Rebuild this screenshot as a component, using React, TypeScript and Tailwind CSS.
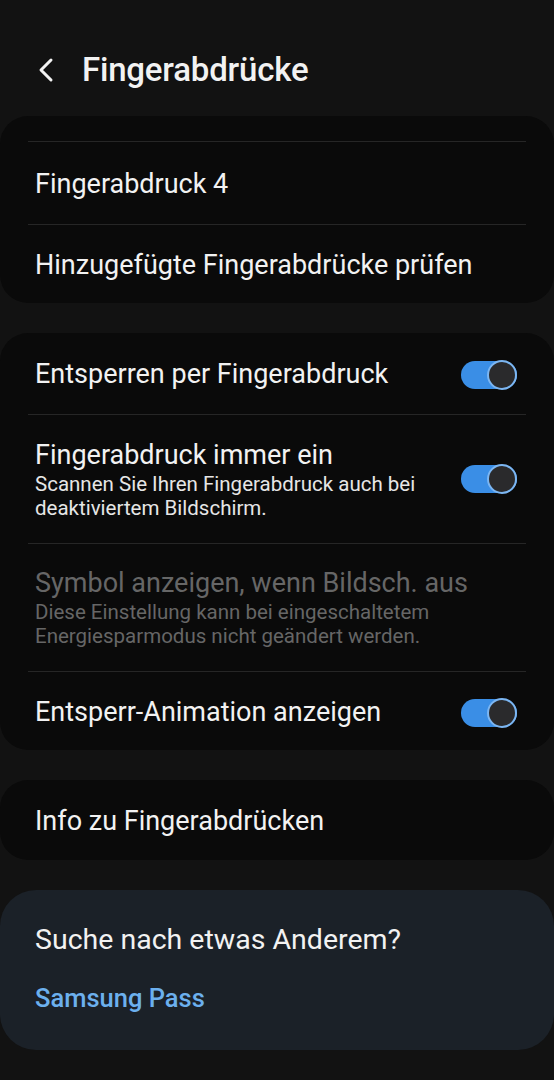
import React from "react";

const font = { fontFamily: "Roboto, 'Noto Sans', sans-serif" };

function Toggle() {
  return (
    <div className="relative w-[56px] h-[28px] rounded-full bg-[#3a8ee6] shrink-0">
      <div className="absolute right-0 top-1/2 -translate-y-1/2 w-[30px] h-[30px] rounded-full bg-[#2a2a2c] border-2 border-[#7cb6f2]" />
    </div>
  );
}

function Divider() {
  return <div className="mx-[28px] h-px bg-[#262626]" />;
}

export default function App() {
  return (
    <div style={font} className="w-[554px] h-[1080px] bg-[#121212] text-[#f2f2f2] overflow-hidden">
      {/* Header */}
      <div className="h-[116px] flex items-center pl-[36px] pt-[24px]">
        <svg width="20" height="28" viewBox="0 0 20 28" className="mr-[26px]">
          <path d="M15 4 L5 14 L15 24" fill="none" stroke="#f2f2f2" strokeWidth="3" strokeLinecap="round" strokeLinejoin="round" />
        </svg>
        <span className="text-[33px] font-medium tracking-[-0.2px]">Fingerabdrücke</span>
      </div>

      {/* Card 1 */}
      <div className="bg-[#0a0a0a] rounded-[28px]">
        <div className="h-[25px]" />
        <Divider />
        <div className="h-[82px] flex items-center px-[35px] pt-[2px] text-[27px]">Fingerabdruck 4</div>
        <Divider />
        <div className="h-[78px] flex items-center px-[35px] pt-[2px] text-[27px]">Hinzugefügte Fingerabdrücke prüfen</div>
      </div>

      {/* Card 2 */}
      <div className="mt-[30px] bg-[#0a0a0a] rounded-[28px]">
        <div className="h-[81px] flex items-center justify-between pl-[35px] pr-[37px] pt-[2px] text-[27px]">
          <span>Entsperren per Fingerabdruck</span>
          <Toggle />
        </div>
        <Divider />
        <div className="h-[128px] flex items-center justify-between pl-[35px] pr-[37px]">
          <div className="flex flex-col">
            <span className="text-[27px] leading-[34px]">Fingerabdruck immer ein</span>
            <span className="text-[20.5px] leading-[24px] text-[#e6e6e6]">
              Scannen Sie Ihren Fingerabdruck auch bei<br />deaktiviertem Bildschirm.
            </span>
          </div>
          <Toggle />
        </div>
        <Divider />
        <div className="h-[127px] flex items-center pl-[35px] pr-[37px] pb-[2px]">
          <div className="flex flex-col text-[#666666]">
            <span className="text-[27px] leading-[34px]">Symbol anzeigen, wenn Bildsch. aus</span>
            <span className="text-[20.5px] leading-[24px]">
              Diese Einstellung kann bei eingeschaltetem<br />Energiesparmodus nicht geändert werden.
            </span>
          </div>
        </div>
        <Divider />
        <div className="h-[78px] flex items-center justify-between pl-[35px] pr-[37px] pt-[3px] text-[27px]">
          <span>Entsperr-Animation anzeigen</span>
          <Toggle />
        </div>
      </div>

      {/* Card 3 */}
      <div className="mt-[30px] bg-[#0a0a0a] rounded-[28px] h-[80px] flex items-center px-[35px] pt-[3px] text-[27px]">
        Info zu Fingerabdrücken
      </div>

      {/* Card 4 */}
      <div className="mt-[30px] bg-[#1b2128] rounded-[36px] h-[160px] flex flex-col pt-[31px] px-[35px]">
        <span className="text-[28.5px] leading-[38px]">Suche nach etwas Anderem?</span>
        <span className="text-[25.5px] leading-[34px] font-medium text-[#6cb0ee] mt-[22px]">Samsung Pass</span>
      </div>
    </div>
  );
}
